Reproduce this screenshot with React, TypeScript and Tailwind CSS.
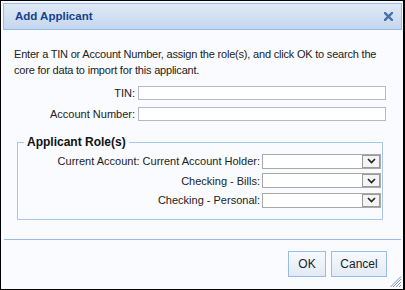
import React from "react";

const font = { fontFamily: '"Liberation Sans", Arial, sans-serif' };

const roles = [
  "Current Account: Current Account Holder:",
  "Checking - Bills:",
  "Checking - Personal:",
];

function CloseIcon() {
  return (
    <svg width="9" height="9" viewBox="0 0 9 9">
      <path d="M1 1 L8 8 M8 1 L1 8" stroke="#4a6ea9" strokeWidth="2.4" strokeLinecap="square" />
    </svg>
  );
}

function Chevron() {
  return (
    <svg width="9" height="6" viewBox="0 0 9 6">
      <path d="M1 1 L4.5 4.5 L8 1" fill="none" stroke="#222" strokeWidth="1.6" />
    </svg>
  );
}

function Grip() {
  return (
    <svg width="12" height="12" viewBox="0 0 12 12" className="absolute right-[1px] bottom-[1px]">
      <path d="M11 3 L3 11 M11 6 L6 11 M11 9 L9 11 M11 0.5 L0.5 11" stroke="#6f86a8" strokeWidth="0.9" />
    </svg>
  );
}

function Combo() {
  return (
    <div className="flex h-[15px] w-[119px] border border-[#a9a9a9] bg-white">
      <div className="flex-1" />
      <div className="flex w-[18px] items-center justify-center border border-[#9a9a9a] bg-[#f4f4f4]">
        <Chevron />
      </div>
    </div>
  );
}

export default function App() {
  return (
    <div
      className="relative flex h-[290px] w-[405px] flex-col border-y border-l border-r-2 border-black bg-[#f9fbfe] pt-[2px] pl-[2px] pr-[1px] text-[11px] text-[#222]"
      style={font}
    >
      {/* title bar */}
      <div className="flex h-[27px] items-center justify-between border border-[#99bbe8] bg-gradient-to-b from-[#dfe9f6] to-[#c4d6ef] pl-[11px] pr-[8px]">
        <span className="text-[11.5px] font-bold text-[#15428b]">Add Applicant</span>
        <CloseIcon />
      </div>

      {/* body */}
      <div className="flex flex-1 flex-col pl-[11px] pr-[16px] pt-[16px]">
        <p className="leading-[16px] tracking-[-0.2px] whitespace-nowrap">
          Enter a TIN or Account Number, assign the role(s), and click OK to search the
          <br />
          core for data to import for this applicant.
        </p>

        <div className="mt-[7px] flex flex-col gap-[4px]">
          <div className="flex items-center justify-end gap-[3px]">
            <span>TIN:</span>
            <div className="h-[14px] w-[248px] border border-[#b5b8c8] bg-white" />
          </div>
          <div className="flex items-center justify-end gap-[3px]">
            <span>Account Number:</span>
            <div className="h-[14px] w-[248px] border border-[#b5b8c8] bg-white" />
          </div>
        </div>

        <fieldset className="mt-[13px] mx-[3px] border border-[#a8c6e8] pr-[1px] pb-[10px]">
          <legend className="ml-[6px] px-[3px] text-[12px] font-bold leading-[14px] text-[#111]">
            Applicant Role(s)
          </legend>
          <div className="mt-[4px] flex flex-col gap-[3px]">
            {roles.map((r) => (
              <div key={r} className="flex items-center justify-end gap-[2px]">
                <span>{r}</span>
                <Combo />
              </div>
            ))}
          </div>
        </fieldset>
      </div>

      {/* footer */}
      <div className="flex h-[50px] items-center justify-end gap-[5px] border-t border-[#99bbe8] pr-[14px] pb-[1px] mx-[1px]">
        <button className="h-[26px] w-[38px] border border-[#99bbe8] bg-gradient-to-b from-[#f7faff] to-[#e1eaf6] text-[12px] text-[#222]">
          OK
        </button>
        <button className="h-[26px] w-[56px] border border-[#99bbe8] bg-gradient-to-b from-[#f7faff] to-[#e1eaf6] text-[12px] text-[#222]">
          Cancel
        </button>
      </div>
      <Grip />
    </div>
  );
}
